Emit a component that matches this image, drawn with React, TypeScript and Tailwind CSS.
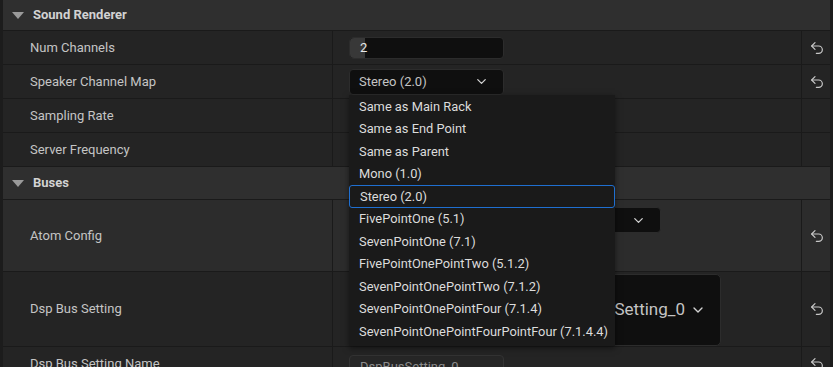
import { ChevronDown, Undo2 } from 'lucide-react'

const menuItems = [
    'Same as Main Rack',
    'Same as End Point',
    'Same as Parent',
    'Mono (1.0)',
    'Stereo (2.0)',
    'FivePointOne (5.1)',
    'SevenPointOne (7.1)',
    'FivePointOnePointTwo (5.1.2)',
    'SevenPointOnePointTwo (7.1.2)',
    'SevenPointOnePointFour (7.1.4)',
    'SevenPointOnePointFourPointFour (7.1.4.4)',
]

const Triangle = () => (
    <svg width="12" height="7" viewBox="0 0 12 7" className="ml-[9px] mr-[9px]">
        <path d="M0 0h12L6 7z" fill="#9a9a9a" />
    </svg>
)

const Category = ({ title, h = 'h-[30px]' }: { title: string; h?: string }) => (
    <div className={`flex items-center ${h} bg-[#2f2f2f] border-b border-[#1a1a1a] box-content`}>
        <Triangle />
        <span className="font-bold text-[13px] text-[#d2d2d2]">{title}</span>
    </div>
)

const ResetCell = ({ show }: { show: boolean }) => (
    <div className="w-[27px] flex items-center justify-center border-l border-[#1a1a1a] text-[#c8c8c8]">
        {show && <Undo2 size={16} strokeWidth={1.8} className="ml-[3px]" />}
    </div>
)

const Row = ({ label, h = 'h-[33px]', bg = 'bg-[#242424]', children, reset = true }: any) => (
    <div className={`flex ${h} ${bg} border-b border-[#1a1a1a] box-content`}>
        <div className="w-[330px] flex items-center pl-[27px] text-[13px] text-[#c4c4c4] border-r border-[#1a1a1a]">
            {label}
        </div>
        <div className="w-[468px] flex items-center pl-[16px]">{children}</div>
        <ResetCell show={reset} />
    </div>
)

const App = () => {
    return (
        <div className="relative w-[833px] h-[367px] overflow-hidden bg-[#1c1c1c] pl-[3px] pr-[3px]" style={{ fontFamily: 'Roboto, "Liberation Sans", sans-serif' }}>
            <Category title="Sound Renderer" />
            <Row label="Num Channels">
                <div className="w-[155px] h-[22px] rounded-[4px] bg-[#0f0f0f] border border-[#2c2c2c] flex items-center">
                    <div className="w-[15px] h-full rounded-l-[4px] bg-[#383838]" />
                    <span className="-ml-[5px] text-[13px] text-[#e8e8e8]">2</span>
                </div>
            </Row>
            <Row label="Speaker Channel Map">
                <div className="w-[155px] h-[26px] rounded-[4px] bg-[#0f0f0f] border border-[#2c2c2c] flex items-center justify-between pl-[9px] pr-[14px] text-[13px] text-[#c4c4c4]">
                    <span>Stereo (2.0)</span>
                    <ChevronDown size={15} strokeWidth={2} className="text-[#d4d4d4]" />
                </div>
            </Row>
            <Row label="Sampling Rate" reset={false} />
            <Row label="Server Frequency" reset={false} />
            <Category title="Buses" h="h-[32px]" />
            <Row label="Atom Config" h="h-[71px]" bg="bg-[#2c2c2c]">
                <div className="w-[312px] h-[26px] self-start mt-[7px] rounded-[4px] bg-[#0f0f0f] border border-[#2c2c2c] flex items-center justify-end pr-[14px]">
                    <ChevronDown size={15} strokeWidth={2} className="text-[#d4d4d4]" />
                </div>
            </Row>
            <Row label="Dsp Bus Setting" h="h-[74px]">
                <div className="w-[372px] h-[72px] mt-[1px] rounded-[5px] bg-[#0f0f0f] border border-[#2c2c2c] flex items-center justify-end pr-[14px] gap-[5px]">
                    <span className="text-[17px] text-[#c4c4c4]">DspBusSetting_0</span>
                    <ChevronDown size={16} strokeWidth={2} className="text-[#d4d4d4]" />
                </div>
            </Row>
            <Row label="Dsp Bus Setting Name">
                <div className="w-[155px] h-[24px] mt-[6px] rounded-[4px] bg-[#262626] border border-[#333333] flex items-center pl-[10px] text-[13px] text-[#8c8c8c]">
                    DspBusSetting_0
                </div>
            </Row>

            <div className="absolute left-[349px] top-[95px] w-[266px] bg-[#1a1a1a] pb-[3px] shadow-[0_2px_6px_rgba(0,0,0,0.5)]">
                {menuItems.map((item) => (
                    <div
                        key={item}
                        className={`h-[22.5px] flex items-center pl-[10px] text-[12.85px] text-[#dcdcdc] ${item === 'Stereo (2.0)' ? 'border border-[#1f6fd0] rounded-[3px] pl-[9px]' : ''}`}
                    >
                        {item}
                    </div>
                ))}
            </div>
        </div>
    )
}

export default App
